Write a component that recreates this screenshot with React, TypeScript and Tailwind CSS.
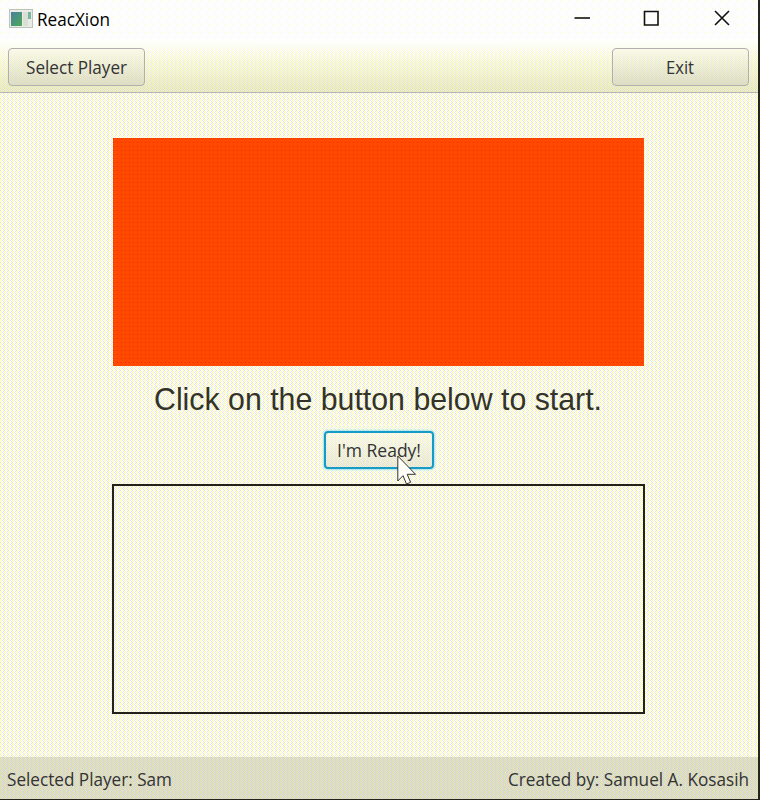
import React from 'react';

const ui = "font-['Open_Sans','Noto_Sans',sans-serif]";

function Label({ children, width, size = 17.5, color = '#333333' }: { children: string; width: number; size?: number; color?: string }) {
  return (
    <svg width={width} height="28" className={`block overflow-visible ${ui}`}>
      <text x="0" y="20" fontSize={size} fill={color} textLength={width} lengthAdjust="spacingAndGlyphs">
        {children}
      </text>
    </svg>
  );
}

const toolButton =
  'flex h-[38px] w-[137px] items-center justify-center rounded-[4px] border border-[#b0b0b0] bg-[linear-gradient(#f7f7e480,#cfcfc080)] pt-px';

const dither =
  'bg-white bg-[conic-gradient(at_1px_1px,transparent_75%,#ffff99_75%),conic-gradient(at_1px_1px,transparent_75%,#ffff99_75%),conic-gradient(at_1px_1px,transparent_75%,#ffff99_75%),conic-gradient(at_1px_1px,transparent_75%,#ffff99_75%),conic-gradient(at_1px_1px,transparent_75%,#e4e4f4_75%),conic-gradient(at_1px_1px,transparent_75%,#e4e4f4_75%),conic-gradient(at_1px_1px,transparent_75%,#e4e4f4_75%),conic-gradient(at_1px_1px,transparent_75%,#e4e4f4_75%)] bg-[length:4px_4px] bg-[position:0_0,2px_2px,1px_1px,1px_3px,2px_0,0_2px,3px_1px,3px_3px]';

export default function App() {
  return (
    <div className="flex h-[800px] w-[760px] overflow-hidden bg-[#24241c]">
      <div className={`flex h-[799px] w-[758px] flex-col ${dither}`}>
        <header className="flex h-[39px] shrink-0 items-center bg-[#fdfdfd] bg-[conic-gradient(at_1px_1px,transparent_75%,#ffffa0_75%)] bg-[length:8px_8px] pl-[9px]">
          <svg className="-mt-0.5" width="25" height="20" viewBox="0 0 25 20">
            <defs>
              <linearGradient id="app" x1="0" y1="0" x2="1" y2="1">
                <stop offset="0" stopColor="#477fa0" />
                <stop offset="1" stopColor="#4eaa55" />
              </linearGradient>
            </defs>
            <rect x=".5" y=".5" width="23" height="18" fill="#e9ebe6" stroke="#bfc3bd" />
            <rect x="2" y="3" width="11" height="14" fill="url(#app)" />
            <rect x="14" y="3" width="5" height="14" fill="#d9dfd4" />
            <rect x="19" y="3" width="3" height="7" fill="#79b6a0" />
          </svg>
          <div className="ml-[3px]">
            <Label width={73} size={17.5} color="#000000">ReacXion</Label>
          </div>
          <svg className="-mt-[3px] ml-auto mr-[28px]" width="156" height="18" viewBox="0 0 156 18" fill="none" stroke="#111" strokeWidth="1.6">
            <path d="M0.500 9H16" />
            <path d="M70.500 2.500H84V16H70.500Z" />
            <path d="M141 2L155 16M155 2L141 16" />
          </svg>
        </header>
        <nav className="flex h-[54px] shrink-0 items-start justify-between border-b border-[#b5b5b5] bg-[linear-gradient(#ffffff_0%,#f6f6d060_40%,#dcdca890_100%)] pl-2 pr-[9px] pt-[9px]">
          <button className={toolButton}><Label width={101}>Select Player</Label></button>
          <button className={toolButton}><div className="mr-0.5"><Label width={28}>Exit</Label></div></button>
        </nav>
        <main className="flex min-h-0 flex-1 flex-col items-center pr-0.5 pt-[45px]">
          <div className="h-[228px] w-[531px] bg-[#ff4800] bg-[conic-gradient(at_1px_1px,transparent_75%,#e83000_75%)] bg-[length:4px_4px]" />
          <svg width="448" height="65" className="block overflow-visible font-['Liberation_Sans',Arial,sans-serif]">
            <text x="0" y="43.5" fontSize="30.5" fill="#333329" textLength="448" lengthAdjust="spacingAndGlyphs">Click on the button below to start.</text>
          </svg>
          <div className="relative ml-0.5">
            <button className="flex h-[38px] w-[110px] items-center justify-center rounded-[4px] border-2 border-[#159bc5] bg-[linear-gradient(#fafae880,#dcdcc890)] pt-px shadow-[0_0_2px_1px_#a5e2ee]">
              <Label width={84}>I'm Ready!</Label>
            </button>
            <svg className="absolute left-[73px] top-[24px]" width="20" height="30" viewBox="0 0 20 30">
              <path d="M.8 1V26L6 20.700L9.500 29L13.600 27.300L10.200 19.300H18.500Z" fill="#fffff8" stroke="#333" strokeWidth="1" />
            </svg>
          </div>
          <div className="mt-[15px] h-[230px] w-[533px] border-2 border-[#22221a]" />
        </main>
        <footer className="flex h-[42px] shrink-0 items-center justify-between bg-[#b8b89c70] pl-[7px] pr-[9px] pt-1">
          <Label width={165}>Selected Player: Sam</Label>
          <Label width={241}>Created by: Samuel A. Kosasih</Label>
        </footer>
      </div>
    </div>
  );
}
